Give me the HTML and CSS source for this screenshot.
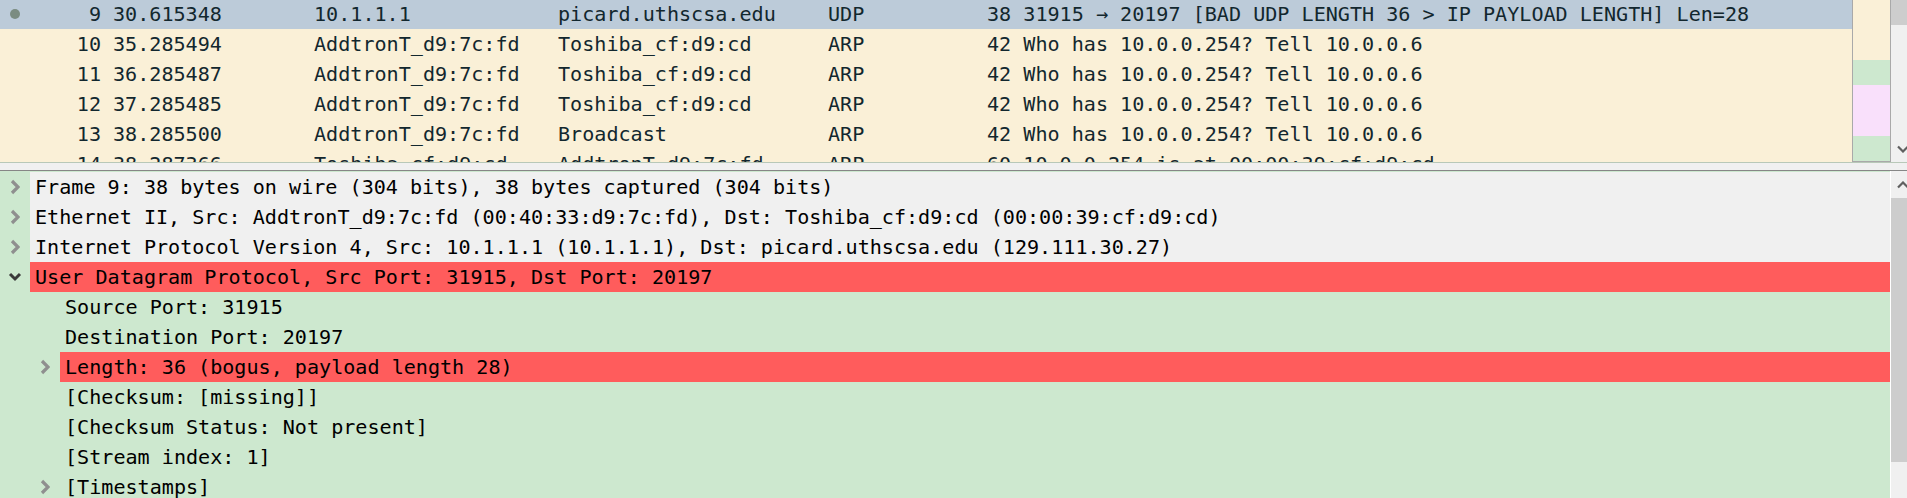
FILE: index.html
```html
<!DOCTYPE html>
<html>
<head>
<meta charset="utf-8">
<link rel="stylesheet" href="styles.css">
</head>
<body>
<div class="app">
  <div class="plist">
    <div class="rows">
      <div class="rows-inner">
        <div class="row sel"><span class="mark"><span class="dot"></span></span><span class="no">9</span><span class="time">30.615348</span><span>10.1.1.1</span><span>picard.uthscsa.edu</span><span>UDP</span><span>38 31915 → 20197 [BAD UDP LENGTH 36 &gt; IP PAYLOAD LENGTH] Len=28</span></div>
        <div class="row arp"><span class="mark"></span><span class="no">10</span><span class="time">35.285494</span><span>AddtronT_d9:7c:fd</span><span>Toshiba_cf:d9:cd</span><span>ARP</span><span>42 Who has 10.0.0.254? Tell 10.0.0.6</span></div>
        <div class="row arp"><span class="mark"></span><span class="no">11</span><span class="time">36.285487</span><span>AddtronT_d9:7c:fd</span><span>Toshiba_cf:d9:cd</span><span>ARP</span><span>42 Who has 10.0.0.254? Tell 10.0.0.6</span></div>
        <div class="row arp"><span class="mark"></span><span class="no">12</span><span class="time">37.285485</span><span>AddtronT_d9:7c:fd</span><span>Toshiba_cf:d9:cd</span><span>ARP</span><span>42 Who has 10.0.0.254? Tell 10.0.0.6</span></div>
        <div class="row arp"><span class="mark"></span><span class="no">13</span><span class="time">38.285500</span><span>AddtronT_d9:7c:fd</span><span>Broadcast</span><span>ARP</span><span>42 Who has 10.0.0.254? Tell 10.0.0.6</span></div>
        <div class="row arp"><span class="mark"></span><span class="no">14</span><span class="time">38.287366</span><span>Toshiba_cf:d9:cd</span><span>AddtronT_d9:7c:fd</span><span>ARP</span><span>60 10.0.0.254 is at 00:00:39:cf:d9:cd</span></div>
      </div>
    </div>
    <div class="minimap">
      <div class="mm tan"></div>
      <div class="mm green g1"></div>
      <div class="mm pink"></div>
      <div class="mm green g2"></div>
    </div>
    <div class="vscroll top-scroll">
      <div class="thumb t1"></div>
      <div class="track"></div>
      <div class="arrow">
        <svg width="12" height="8" viewBox="0 0 12 8"><polyline points="1,1.5 6,6.5 11,1.5" fill="none" stroke="#606060" stroke-width="2.2"/></svg>
      </div>
    </div>
  </div>
  <div class="splitter"></div>
  <div class="details">
    <div class="tree">
      <div class="trow">
        <span class="exp"><svg width="10" height="16" viewBox="0 0 10 16"><polyline points="2,2 8,8 2,14" fill="none" stroke="#8f8f8f" stroke-width="3.2"/></svg></span>
        <span class="label gray">Frame 9: 38 bytes on wire (304 bits), 38 bytes captured (304 bits)</span>
      </div>
      <div class="trow">
        <span class="exp"><svg width="10" height="16" viewBox="0 0 10 16"><polyline points="2,2 8,8 2,14" fill="none" stroke="#8f8f8f" stroke-width="3.2"/></svg></span>
        <span class="label gray">Ethernet II, Src: AddtronT_d9:7c:fd (00:40:33:d9:7c:fd), Dst: Toshiba_cf:d9:cd (00:00:39:cf:d9:cd)</span>
      </div>
      <div class="trow">
        <span class="exp"><svg width="10" height="16" viewBox="0 0 10 16"><polyline points="2,2 8,8 2,14" fill="none" stroke="#8f8f8f" stroke-width="3.2"/></svg></span>
        <span class="label gray">Internet Protocol Version 4, Src: 10.1.1.1 (10.1.1.1), Dst: picard.uthscsa.edu (129.111.30.27)</span>
      </div>
      <div class="trow">
        <span class="exp"><svg width="14" height="10" viewBox="0 0 14 10"><polyline points="2,2 7,7 12,2" fill="none" stroke="#3a3a3a" stroke-width="3"/></svg></span>
        <span class="label red">User Datagram Protocol, Src Port: 31915, Dst Port: 20197</span>
      </div>
      <div class="trow">
        <span class="indent"></span><span class="exp"></span>
        <span class="label">Source Port: 31915</span>
      </div>
      <div class="trow">
        <span class="indent"></span><span class="exp"></span>
        <span class="label">Destination Port: 20197</span>
      </div>
      <div class="trow">
        <span class="indent"></span><span class="exp"><svg width="10" height="16" viewBox="0 0 10 16"><polyline points="2,2 8,8 2,14" fill="none" stroke="#8f8f8f" stroke-width="3.2"/></svg></span>
        <span class="label red">Length: 36 (bogus, payload length 28)</span>
      </div>
      <div class="trow">
        <span class="indent"></span><span class="exp"></span>
        <span class="label">[Checksum: [missing]]</span>
      </div>
      <div class="trow">
        <span class="indent"></span><span class="exp"></span>
        <span class="label">[Checksum Status: Not present]</span>
      </div>
      <div class="trow">
        <span class="indent"></span><span class="exp"></span>
        <span class="label">[Stream index: 1]</span>
      </div>
      <div class="trow">
        <span class="indent"></span><span class="exp"><svg width="10" height="16" viewBox="0 0 10 16"><polyline points="2,2 8,8 2,14" fill="none" stroke="#8f8f8f" stroke-width="3.2"/></svg></span>
        <span class="label">[Timestamps]</span>
      </div>
    </div>
    <div class="vscroll bottom-scroll">
      <div class="arrow up">
        <svg width="12" height="8" viewBox="0 0 12 8"><polyline points="1,6.5 6,1.5 11,6.5" fill="none" stroke="#606060" stroke-width="2.2"/></svg>
      </div>
      <div class="thumb t2"></div>
      <div class="track"></div>
    </div>
  </div>
</div>
</body>
</html>
```

FILE: styles.css
```css
html, body {
  margin: 0;
  padding: 0;
  background: #f0f0f0;
  overflow: hidden;
}

.app {
  width: 1907px;
  height: 498px;
  overflow: hidden;
  font-family: "DejaVu Sans Mono", "Liberation Mono", monospace;
  font-size: 20.1px;
}

/* ---------- packet list ---------- */
.plist {
  display: flex;
  height: 162px;
  border-bottom: 1px solid #b8c8b8;
  overflow: hidden;
}

.rows {
  flex: 0 0 1852px;
  overflow: hidden;
  background: #faf0d7;
}

.rows-inner {
  margin-top: -1px;
}

.row {
  display: grid;
  grid-template-columns: 30px 71px 213px 244px 270px 159px 1fr;
  height: 30px;
  line-height: 30px;
  white-space: nowrap;
  color: #12272e;
}

.row > span {
  overflow: hidden;
}

.row.sel {
  background: #bccbd9;
}

.row.arp {
  background: #faf0d7;
}

.mark {
  display: flex;
  align-items: center;
  justify-content: center;
}

.dot {
  width: 10px;
  height: 10px;
  border-radius: 50%;
  background: #7b8c81;
}

.no {
  text-align: right;
}

.time {
  padding-left: 12px;
}

.minimap {
  flex: 0 0 39px;
  box-sizing: border-box;
  height: 162px;
  border: 1px solid #a9a9a9;
  border-top: 0;
  display: flex;
  flex-direction: column;
}

.mm.tan { height: 60px; background: #faf0d7; }
.mm.green.g1 { height: 25px; background: #cde8cf; }
.mm.pink { height: 51px; background: #f9e0fb; }
.mm.green.g2 { flex: 1; background: #cde8cf; }

.vscroll {
  flex: 0 0 25px;
  display: flex;
  flex-direction: column;
  background: #f0f0f0;
}

.thumb {
  background: #cdcdcd;
  margin: 0 2px 0 0;
}

.thumb.t1 { height: 25px; }
.thumb.t2 { height: 264px; }

.track { flex: 1; }

.arrow {
  height: 26px;
  display: flex;
  align-items: center;
  padding-left: 6px;
}

.top-scroll .arrow {
  height: 26px;
}

/* ---------- splitter ---------- */
.splitter {
  height: 7px;
  border-bottom: 1px solid #868686;
  background: #f0f0f0;
}

/* ---------- details ---------- */
.details {
  display: flex;
  height: 327px;
}

.tree {
  flex: 0 0 1890px;
  border-right: 1px solid #ffffff;
  background: #cde8cf;
  padding-top: 1px;
  overflow: hidden;
}

.trow {
  display: flex;
  height: 30px;
  line-height: 30px;
  white-space: nowrap;
  color: #000;
}

.indent {
  flex: 0 0 30px;
}

.exp {
  flex: 0 0 30px;
  display: flex;
  align-items: center;
  justify-content: center;
}

.label {
  flex: 1;
  padding-left: 5px;
}

.label.gray { background: #f0f0f0; }
.label.red { background: #ff5c5c; }

.bottom-scroll .arrow.up {
  height: 27px;
}
```
